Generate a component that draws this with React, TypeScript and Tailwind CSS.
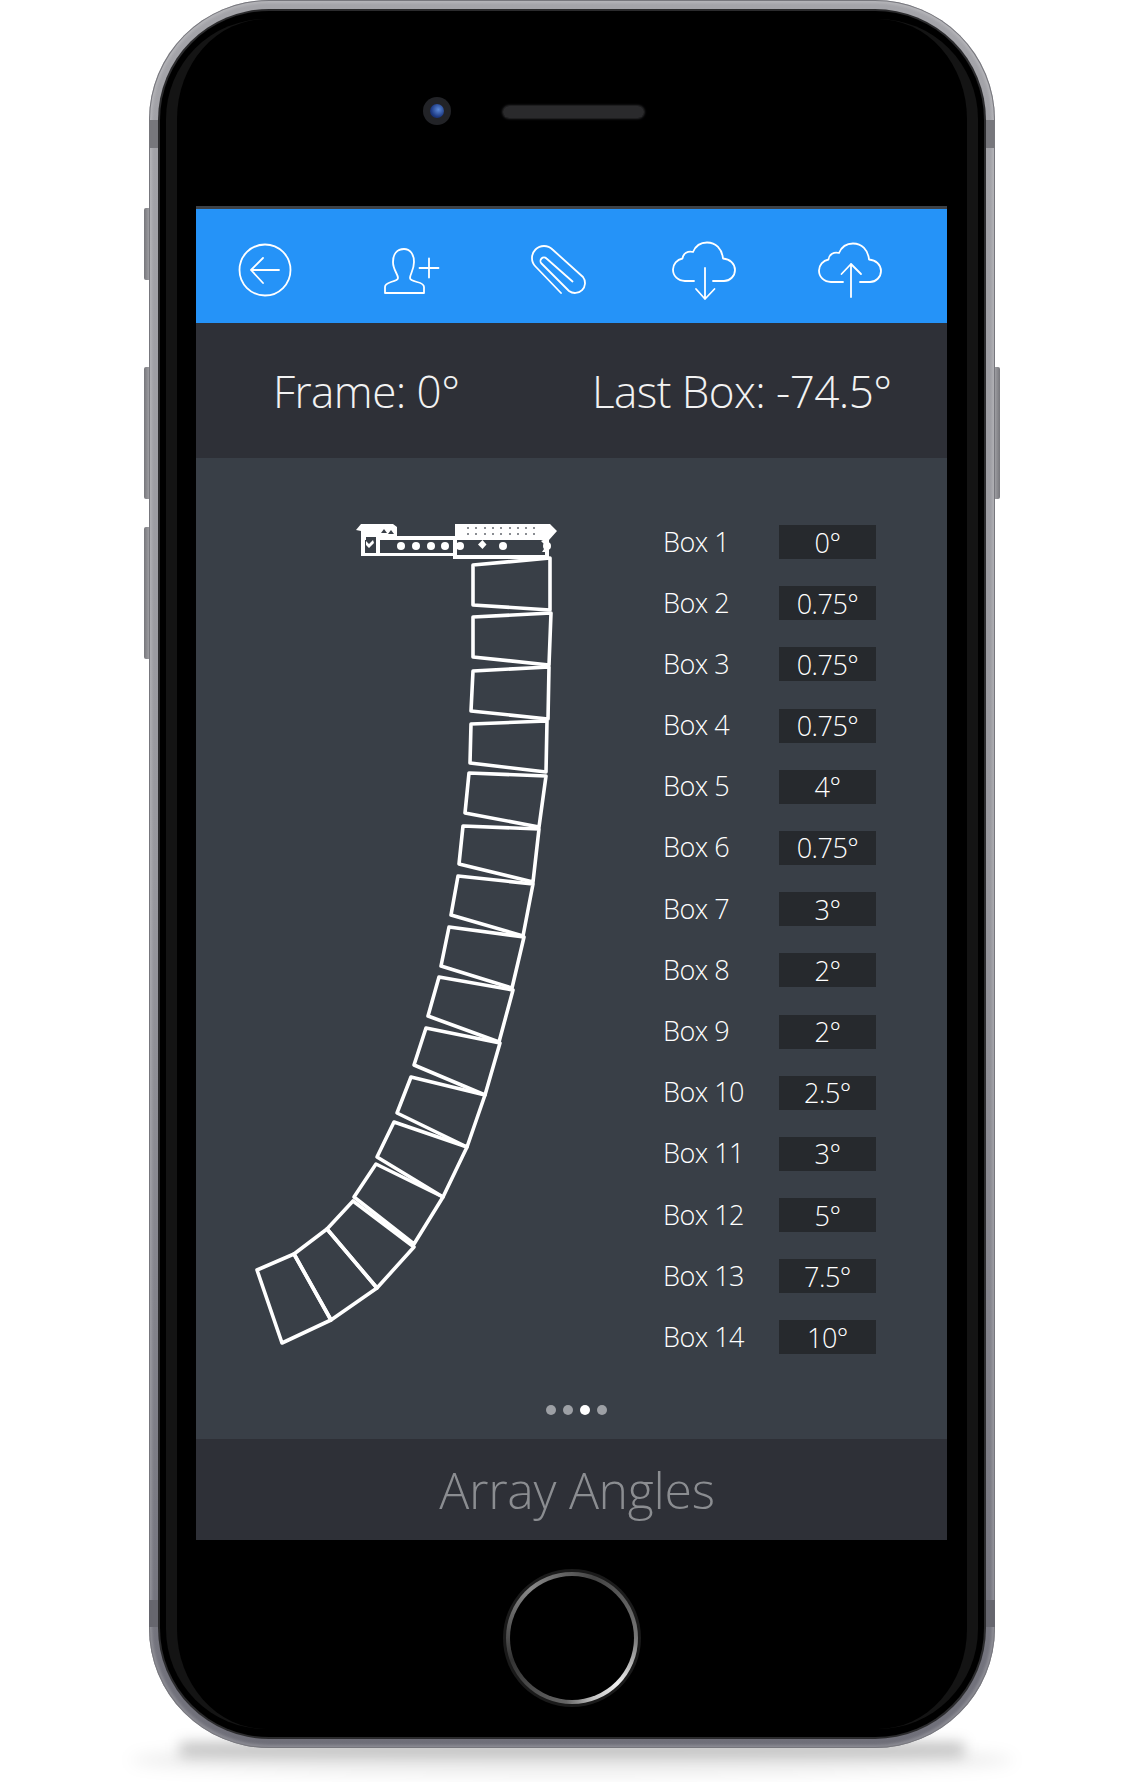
import React, { FC } from "react";

const rows = [
  ["Box 1", "0°"],
  ["Box 2", "0.75°"],
  ["Box 3", "0.75°"],
  ["Box 4", "0.75°"],
  ["Box 5", "4°"],
  ["Box 6", "0.75°"],
  ["Box 7", "3°"],
  ["Box 8", "2°"],
  ["Box 9", "2°"],
  ["Box 10", "2.5°"],
  ["Box 11", "3°"],
  ["Box 12", "5°"],
  ["Box 13", "7.5°"],
  ["Box 14", "10°"],
];

// outline of each cabinet, taken from the picture
const boxes = [
  "473,565 550,558 550,610 473,605",
  "473,617 551,613 549,665 473,657",
  "473,671 549,667 548,719 471,711",
  "471,724 547,721 546,772 470,763",
  "469,773 546,776 539,827 465,813",
  "463,826 539,829 533,882 459,864",
  "458,876 533,884 523,936 451,915",
  "449,927 524,937 512,988 441,966",
  "439,977 513,990 499,1042 428,1016",
  "426,1028 500,1043 485,1095 414,1065",
  "411,1077 485,1095 467,1147 397,1113",
  "394,1122 467,1147 443,1197 377,1157",
  "376,1164 443,1197 414,1244 354,1197",
  "353,1201 414,1247 377,1288 327,1229",
  "327,1229 377,1288 331,1320 294,1254",
  "294,1254 331,1320 282,1343 257,1270",
];

const frameDots = [401, 416, 431, 445, 460, 503, 547];
const capDots = [467, 475, 484, 492, 500, 509, 517, 525, 533];

const cloud = "M22 47H13C6 47 1 42 1 35.500C1 30 5 25.500 10.500 24.500C11 19.500 16 16.500 21 18C23.500 12 29 8.500 35 8.500C44 8.500 50 15 51 24.500C58 25 63 30 63 36C63 42 58 47 52 47H41";
const cloudUp = "M25 48H13C6 48 1 43 1 36.500C1 31 5 26.500 10.500 25.500C11 20.500 16 17.500 21 19C23.500 13 29 9.500 35 9.500C44 9.500 50 16 51 25.500C58 26 63 31 63 37C63 43 58 48 52 48H42";

const IconBox: FC<{ children: React.ReactNode }> = ({ children }) => (
  <svg
    width="64"
    height="72"
    viewBox="0 -4 64 72"
    fill="none"
    stroke="white"
    strokeWidth="1.8"
    strokeLinecap="round"
    strokeLinejoin="round"
  >
    {children}
  </svg>
);

const ArrayDrawing: FC = () => (
  <svg width="310" height="830" viewBox="250 520 310 830" className="ml-[54px] mt-[62px] shrink-0">
    {/* rigging frame */}
    <path
      fill="white"
      d="M356 530L361 524H393L397 527V536H455V524H550L557 531L549 540V559H453V556H361V531ZM365 540V553H376V540ZM380 540V553H453V540ZM457 540V555H545V540Z"
      fillRule="evenodd"
    />
    <path fill="#393f47" d="M381 533L384 529L387 533ZM388 534L391 530L394 534ZM366 537H376V541L371 546L366 541Z" />
    <path fill="white" d="M366 541L369 544L373 540L374 543L369 548L366 545Z" />
    {capDots.map((x) => (
      <g key={x} fill="#8a8d92">
        <rect x={x} y="527" width="2" height="2" />
        <rect x={x} y="533" width="2" height="2" />
      </g>
    ))}
    {frameDots.map((x) => (
      <circle key={x} cx={x} cy="546" r="4" fill="white" />
    ))}
    <path fill="white" d="M482.500 540L486.500 544.500L482.500 549L478 544.500Z" />
    <path fill="white" d="M545 539H549V552H542L546 546L541 541Z" />
    {/* cabinets */}
    {boxes.map((p) => (
      <polygon key={p} points={p} fill="none" stroke="white" strokeWidth="3.600" strokeLinejoin="round" />
    ))}
  </svg>
);

const App: FC = () => {
  return (
    <div className="relative h-[1782px] w-[1141px] overflow-hidden bg-white font-['Open_Sans',sans-serif] font-light">
      {/* shadow under the phone */}
      <div className="absolute left-[130px] top-[1745px] h-[30px] w-[884px] rounded-[50%] bg-[#00000014] blur-[8px]"></div>
      <div className="absolute left-[180px] top-[1742px] h-[14px] w-[784px] bg-[#00000038] blur-[7px]"></div>

      {/* side buttons */}
      <div className="absolute left-[144px] top-[208px] h-[72px] w-[8px] rounded-l-[2px] bg-gradient-to-r from-[#77777c] to-[#b4b4b8]"></div>
      <div className="absolute left-[144px] top-[367px] h-[132px] w-[8px] rounded-l-[2px] bg-gradient-to-r from-[#77777c] to-[#b4b4b8]"></div>
      <div className="absolute left-[144px] top-[527px] h-[132px] w-[8px] rounded-l-[2px] bg-gradient-to-r from-[#77777c] to-[#b4b4b8]"></div>
      <div className="absolute left-[992px] top-[367px] h-[132px] w-[8px] rounded-r-[2px] bg-gradient-to-l from-[#77777c] to-[#b4b4b8]"></div>

      {/* phone body */}
      <div className="relative ml-[149px] h-[1748px] w-[846px] rounded-[120px] bg-gradient-to-b from-[#a4a4a9] via-[#98989e] to-[#6f6f79] p-[11px] shadow-[inset_0_0_0_1px_#77777d,inset_0_0_3px_3px_#ffffff33]">
        {/* antenna bands */}
        <div className="absolute left-0 top-[120px] h-[28px] w-[11px] bg-[#77777c]"></div>
        <div className="absolute right-0 top-[120px] h-[28px] w-[11px] bg-[#77777c]"></div>
        <div className="absolute bottom-[121px] left-0 h-[27px] w-[11px] bg-[#66666e]"></div>
        <div className="absolute bottom-[121px] right-0 h-[27px] w-[11px] bg-[#66666e]"></div>

        <div className="relative h-full w-full rounded-[109px] bg-black shadow-[0_0_0_2px_#2b2b2d]">
          <div className="pointer-events-none absolute inset-x-[6px] inset-y-[8px] rounded-[100px] border-x-[11px] border-y-0 border-[#141414]"></div>

          {/* camera and speaker */}
          <div className="relative flex h-[195px] items-start pl-[263px] pt-[86px]">
            <div className="flex h-[28px] w-[28px] items-center justify-center rounded-full bg-[#222327]">
              <div className="h-[14px] w-[14px] rounded-full bg-[radial-gradient(circle_at_60%_40%,#5c8ad8,#1d3a84_60%,#0f1c44)]"></div>
            </div>
            <div className="ml-[52px] mt-[9px] h-[12px] w-[141px] rounded-full bg-[radial-gradient(#6a6a6e_0.6px,#2a2a2c_0.7px)] bg-[length:2px_2px] shadow-[0_0_3px_#55555a]"></div>
          </div>

          {/* screen */}
          <div className="relative ml-[36px] flex h-[1334px] w-[751px] flex-col bg-[#393f47]">
            <div className="h-[3px] bg-[#3d4248]"></div>
            <div className="flex h-[114px] items-center justify-between bg-[#2593f8] pl-[37px] pr-[65px]">
              <IconBox>
                <circle cx="32" cy="36" r="25.500" />
                <path d="M46 36H18M30 24L18 36L30 49" />
              </IconBox>
              <IconBox>
                <path d="M6 59V53C6 50 9 49 12 48C16 47 19 46 19 44C19 40 14 36 14 28C14 20 18 15 25 15C31 15 35 20 35 28C35 36 31 40 31 44C31 46 34 47 38 48C42 49 45 50 45 53V59Z" />
                <path d="M50 24.500V43.500M40.500 34H59.500" />
              </IconBox>
              <IconBox>
                <path d="M35 59L9.500 32.500A12 12 0 0 1 26.500 15.500L57 43A10 10 0 0 1 43 57L15.500 29.500A3.500 3.500 0 0 1 20.500 24.500L46.500 47.500" />
              </IconBox>
              <IconBox>
                <path d={cloud} />
                <path d="M33 34V65M24 55L33 65L42.500 55" />
              </IconBox>
              <IconBox>
                <path d={cloudUp} />
                <path d="M33 30V63M23.500 40L33 30L43 40" />
              </IconBox>
            </div>

            <div className="flex h-[135px] items-center bg-[#2e3037] pl-[77px] text-[44px] leading-none tracking-[-0.56px] text-[#f2f2f2]">
              <span className="w-[319px]">Frame: 0°</span>
              <span>Last Box: -74.5°</span>
            </div>

            <div className="flex flex-1">
              <ArrayDrawing />
              <div className="ml-[103px] mt-[67px] flex flex-col gap-[27.200px]">
                {rows.map(([name, value]) => (
                  <div key={name} className="flex h-[34px] items-center text-[27px] leading-none tracking-[-0.5px] text-white">
                    <span className="w-[116px] pb-[2px]">{name}</span>
                    <span className="flex h-[34px] w-[97px] items-center justify-center bg-[#26292d]">{value}</span>
                  </div>
                ))}
              </div>
            </div>

            <div className="mb-[24px] flex justify-center gap-[7px] pl-[9px]">
              <span className="h-[10px] w-[10px] rounded-full bg-[#9da0a5]"></span>
              <span className="h-[10px] w-[10px] rounded-full bg-[#9da0a5]"></span>
              <span className="h-[10px] w-[10px] rounded-full bg-white"></span>
              <span className="h-[10px] w-[10px] rounded-full bg-[#9da0a5]"></span>
            </div>

            <div className="flex h-[101px] items-center justify-center bg-[#2e3037] pl-[11px] text-[50px] leading-none tracking-[-0.3px] text-[#8b8d91]">
              Array Angles
            </div>
          </div>

          {/* home button */}
          <div className="mx-auto mt-[29px] h-[138px] w-[138px] rounded-full bg-[#1a1a1a] p-[3px]">
            <div className="h-full w-full rounded-full bg-[conic-gradient(from_90deg,#777_0deg,#f0f0f0_45deg,#c4c4c4_70deg,#666_95deg,#333_160deg,#888_230deg,#444_290deg,#777_360deg)] p-[4px]">
              <div className="h-full w-full rounded-full bg-black"></div>
            </div>
          </div>
        </div>
      </div>
    </div>
  );
};

export default App;
